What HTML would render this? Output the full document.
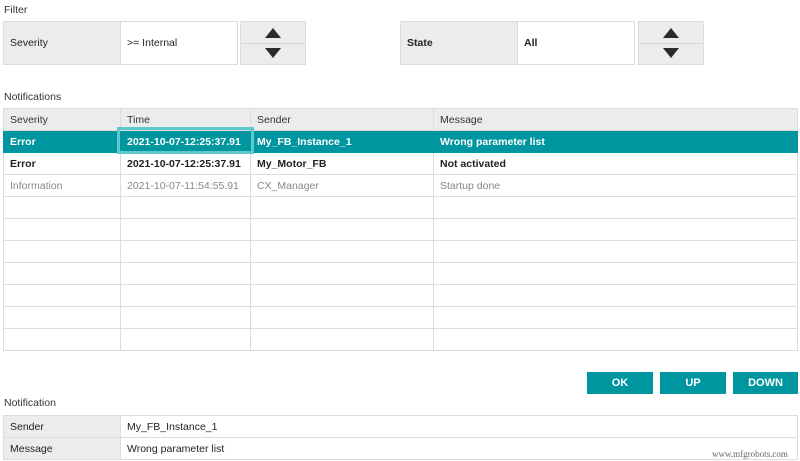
<!DOCTYPE html>
<html><head><meta charset="utf-8"><style>
*{box-sizing:border-box;margin:0;padding:0}
body{width:800px;height:461px;background:#fff;font-family:"Liberation Sans",Arial,sans-serif;font-size:11px;color:#222;position:relative;overflow:hidden}
.a{position:absolute}
.lbl{font-size:10.5px;color:#333}
.g{background:#ececec;border:1px solid #dcdcdc}
.w{background:#fff;border:1px solid #dcdcdc}
.t{display:flex;align-items:center;padding-left:6px;font-size:10.5px}
.arr{background:#ececec;border:1px solid #dcdcdc}
.arr i{position:absolute;left:50%;width:0;height:0;border-left:8px solid transparent;border-right:8px solid transparent;margin-left:-8px}
.arr .u{top:6px;border-bottom:10px solid #2b2b2b}
.arr .d{bottom:6px;border-top:10px solid #2b2b2b}
.arr .m{position:absolute;left:0;right:0;top:21px;border-top:1px solid #d6d6d6}
table{position:absolute;left:3px;top:108px;width:795px;border-collapse:collapse;table-layout:fixed}
td{border:1px solid #dcdcdc;height:22px;padding-left:6px;font-size:10.5px;white-space:nowrap;font-weight:bold}
tr.h td{background:#ececec;font-weight:normal;height:22px;color:#333}
tr.s td{background:#00969f;color:#fff;border-color:#00969f}
tr.i td{color:#888;font-weight:normal}
.btn{background:#00969f;color:#fff;font-weight:bold;font-size:11px;display:flex;align-items:center;justify-content:center;top:372px;height:22px}
</style></head><body>
<div class="a lbl" style="left:4px;top:4px">Filter</div>
<div class="a g t" style="left:3px;top:21px;width:118px;height:44px">Severity</div>
<div class="a w t" style="left:120px;top:21px;width:118px;height:44px">&gt;= Internal</div>
<div class="a arr" style="left:240px;top:21px;width:66px;height:44px"><i class="u"></i><div class="m"></div><i class="d"></i></div>
<div class="a g t" style="left:400px;top:21px;width:118px;height:44px;font-weight:bold">State</div>
<div class="a w t" style="left:517px;top:21px;width:118px;height:44px;font-weight:bold">All</div>
<div class="a arr" style="left:638px;top:21px;width:66px;height:44px"><i class="u"></i><div class="m"></div><i class="d"></i></div>

<div class="a lbl" style="left:4px;top:91px">Notifications</div>
<table>
<colgroup><col style="width:117px"><col style="width:130px"><col style="width:183px"><col></colgroup>
<tr class="h"><td>Severity</td><td>Time</td><td>Sender</td><td>Message</td></tr>
<tr class="s"><td>Error</td><td>2021-10-07-12:25:37.91</td><td>My_FB_Instance_1</td><td>Wrong parameter list</td></tr>
<tr><td>Error</td><td>2021-10-07-12:25:37.91</td><td>My_Motor_FB</td><td>Not activated</td></tr>
<tr class="i"><td>Information</td><td>2021-10-07-11:54:55.91</td><td>CX_Manager</td><td>Startup done</td></tr>
<tr><td></td><td></td><td></td><td></td></tr>
<tr><td></td><td></td><td></td><td></td></tr>
<tr><td></td><td></td><td></td><td></td></tr>
<tr><td></td><td></td><td></td><td></td></tr>
<tr><td></td><td></td><td></td><td></td></tr>
<tr><td></td><td></td><td></td><td></td></tr>
<tr><td></td><td></td><td></td><td></td></tr>
</table>
<div class="a" style="left:117px;top:127px;width:137px;height:27px;border:3px solid #5ec9cd"></div>

<div class="a btn" style="left:587px;width:66px">OK</div>
<div class="a btn" style="left:660px;width:66px">UP</div>
<div class="a btn" style="left:733px;width:65px">DOWN</div>

<div class="a lbl" style="left:4px;top:397px">Notification</div>
<div class="a g t" style="left:3px;top:415px;width:118px;height:23px">Sender</div>
<div class="a w t" style="left:120px;top:415px;width:678px;height:23px">My_FB_Instance_1</div>
<div class="a g t" style="left:3px;top:437px;width:118px;height:23px">Message</div>
<div class="a w t" style="left:120px;top:437px;width:678px;height:23px">Wrong parameter list</div>
<div class="a" style="left:712px;top:449px;font-family:'Liberation Serif',serif;font-size:9px;color:#666">www.mfgrobots.com</div>
</body></html>
